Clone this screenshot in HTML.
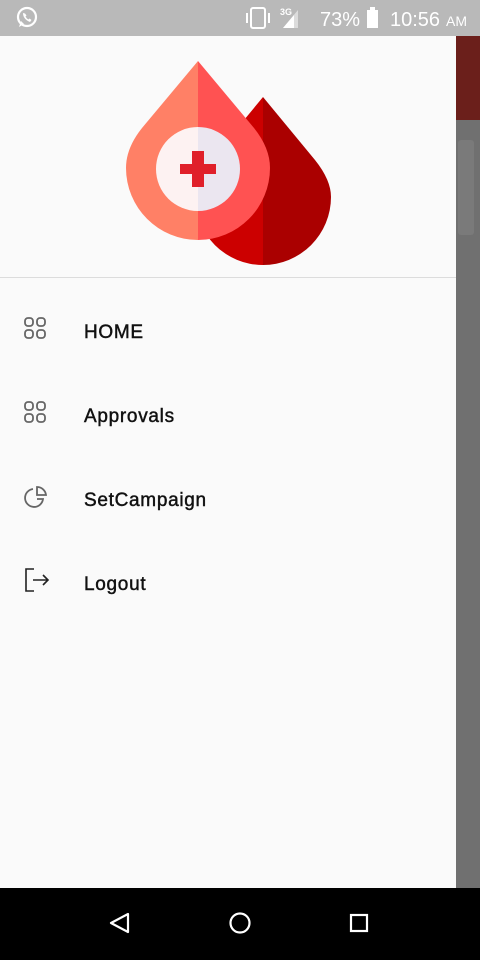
<!DOCTYPE html>
<html><head><meta charset="utf-8"><style>
*{margin:0;padding:0;box-sizing:border-box}
html,body{width:480px;height:960px;overflow:hidden}
body{position:relative;background:#707070;font-family:"Liberation Sans",sans-serif}
.status{position:absolute;left:0;top:0;width:480px;height:36px;background:#b9b9b9;color:#fff}
.drawer{position:absolute;left:0;top:36px;width:456px;height:852px;background:#fafafa}
.nav{position:absolute;left:0;top:888px;width:480px;height:72px;background:#000}
.item{position:absolute;left:84px;font-size:19px;color:#111;letter-spacing:0.7px;-webkit-text-stroke:0.45px #111}
.ic{position:absolute;left:22px}
</style></head><body>
<div style="position:absolute;left:456px;top:36px;width:24px;height:84px;background:#6b1f1b"></div>
<div style="position:absolute;left:458px;top:140px;width:16px;height:95px;background:#7a7a7a;border-radius:3px"></div>
<div class="status">
<svg width="480" height="36" style="position:absolute;left:0;top:0">
<circle cx="27" cy="17" r="9" fill="none" stroke="#fff" stroke-width="2.2"/>
<path d="M19 27 L21 21 L24 24Z" fill="#fff"/>
<path d="M23 13 q0 6 7 9 l1.5 -2 l-2 -1.5 l-1 1 q-2 -1 -3 -3 l1 -1 l-1.5 -2z" fill="#fff"/>
<rect x="251" y="8" width="14" height="20" rx="2" fill="none" stroke="#fff" stroke-width="2"/>
<rect x="246" y="13" width="2" height="10" fill="#fff"/><rect x="268" y="13" width="2" height="10" fill="#fff"/>
<text x="280" y="15" font-size="9" fill="#fff" font-family="Liberation Sans" font-weight="bold">3G</text>
<path d="M283 28 L298 10 L298 28Z" fill="#fff" opacity="0.5"/><path d="M283 28 L294 15 L294 28Z" fill="#fff"/>
<text x="320" y="26" font-size="20" fill="#fff" font-family="Liberation Sans">73%</text>
<rect x="367" y="10" width="11" height="18" fill="#fff"/><rect x="370" y="7" width="5" height="3" fill="#fff"/>
<text x="390" y="26" font-size="20" fill="#fff" font-family="Liberation Sans">10:56</text>
<text x="446" y="26" font-size="14" fill="#fff" font-family="Liberation Sans">AM</text>
</svg>
</div>
<div class="drawer">
<svg width="456" height="241" style="position:absolute;left:0;top:0">
<defs>
<clipPath id="l1"><rect x="0" y="0" width="198" height="300"/></clipPath>
<clipPath id="r1"><rect x="198" y="0" width="300" height="300"/></clipPath>
<clipPath id="l2"><rect x="0" y="0" width="263" height="300"/></clipPath>
<clipPath id="r2"><rect x="263" y="0" width="300" height="300"/></clipPath>
</defs>
<g transform="translate(0,-36)">
<path d="M263 97 L315 160 Q331 180 331 197 A68 68 0 1 1 195 197 Q195 180 211 160 Z" fill="#cc0000" clip-path="url(#l2)"/>
<path d="M263 97 L315 160 Q331 180 331 197 A68 68 0 1 1 195 197 Q195 180 211 160 Z" fill="#aa0000" clip-path="url(#r2)"/>
<path d="M198 61 L254 128 Q270 148 270 168 A72 72 0 1 1 126 168 Q126 148 142 128 Z" fill="#ff8066" clip-path="url(#l1)"/>
<path d="M198 61 L254 128 Q270 148 270 168 A72 72 0 1 1 126 168 Q126 148 142 128 Z" fill="#ff5252" clip-path="url(#r1)"/>
<circle cx="198" cy="169" r="42" fill="#fdf2f2" clip-path="url(#l1)"/>
<circle cx="198" cy="169" r="42" fill="#ebe6f0" clip-path="url(#r1)"/>
<rect x="180" y="164" width="36" height="10" fill="#e0202a"/>
<rect x="192" y="151" width="12" height="36" fill="#e0202a"/>
</g>
</svg>
<div style="position:absolute;left:0;top:241px;width:456px;height:1px;background:#dcdcdc"></div>
</div>
<svg class="ic" style="top:316px" width="26" height="26" viewBox="0 0 26 26" fill="none" stroke="#666" stroke-width="1.8">
<rect x="3" y="2" width="8" height="8" rx="3"/><rect x="15" y="2" width="8" height="8" rx="3"/><rect x="3" y="14" width="8" height="8" rx="3"/><rect x="15" y="14" width="8" height="8" rx="3"/></svg>
<div class="item" style="top:322px">HOME</div>
<svg class="ic" style="top:400px" width="26" height="26" viewBox="0 0 26 26" fill="none" stroke="#666" stroke-width="1.8">
<rect x="3" y="2" width="8" height="8" rx="3"/><rect x="15" y="2" width="8" height="8" rx="3"/><rect x="3" y="14" width="8" height="8" rx="3"/><rect x="15" y="14" width="8" height="8" rx="3"/></svg>
<div class="item" style="top:406px">Approvals</div>
<svg class="ic" style="top:484px" width="26" height="26" viewBox="0 0 26 26" fill="none" stroke="#666" stroke-width="1.8">
<path d="M11 5 A9 9 0 1 0 21 15 L15 15"/><path d="M15 3 A9 9 0 0 1 24 11 L15 11 Z"/></svg>
<div class="item" style="top:490px">SetCampaign</div>
<svg class="ic" style="top:566px" width="28" height="28" viewBox="0 0 28 28" fill="none" stroke="#222" stroke-width="1.6">
<path d="M12 3 H4 V25 H12"/><path d="M11 14 H26 M21 9 L26 14 L21 19"/></svg>
<div class="item" style="top:574px">Logout</div>
<div class="nav">
<svg width="480" height="72">
<path d="M128 26 L111 35 L128 44 Z" fill="none" stroke="#fff" stroke-width="2.2" stroke-linejoin="round"/>
<circle cx="240" cy="35" r="9.5" fill="none" stroke="#fff" stroke-width="2.2"/>
<rect x="351" y="27" width="16" height="16" fill="none" stroke="#fff" stroke-width="2.2"/>
</svg>
</div>
</body></html>
